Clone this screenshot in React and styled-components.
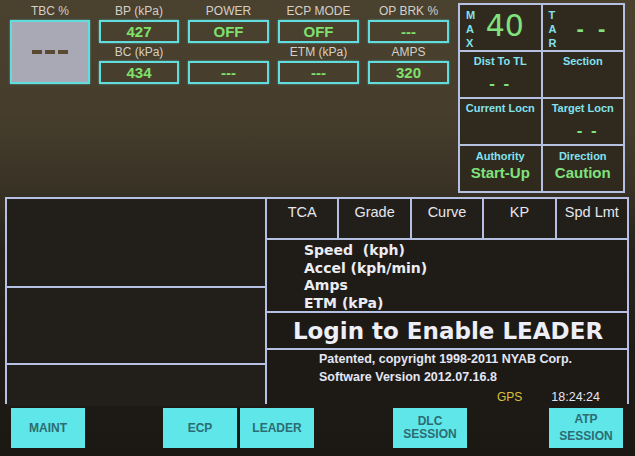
import React from 'react';
import styled, { createGlobalStyle } from 'styled-components';

const GlobalStyle = createGlobalStyle`
  html, body {
    margin: 0;
    padding: 0;
    background: #1c1915;
  }
  body {
    font-family: "Liberation Sans", Arial, sans-serif;
  }
`;

const LINE = '#b6c0e2';

const Screen = styled.div`
  width: 635px;
  height: 456px;
  overflow: hidden;
  display: flex;
  flex-direction: column;
  background: linear-gradient(
    180deg,
    #4a412f 0%,
    #463d2c 25%,
    #3a3326 40%,
    #27231c 55%,
    #201d18 75%,
    #1b1814 100%
  );
`;

const TopBar = styled.div`
  display: flex;
  height: 194px;
`;

const Gauges = styled.div`
  display: grid;
  grid-template-columns: 80px 80px 81px 81px 81px;
  grid-template-rows: 18px 23px 18px 23px;
  column-gap: 9px;
  align-content: start;
  padding: 2px 0 0 10px;
`;

const GaugeLabel = styled.div`
  font-size: 12px;
  color: #d4cfc6;
  text-align: center;
  align-self: center;
  white-space: nowrap;
`;

const ValueBox = styled.div`
  box-sizing: border-box;
  border: 2px solid #62dcdc;
  box-shadow: 0 0 2px rgba(98, 220, 220, 0.6);
  display: flex;
  align-items: center;
  justify-content: center;
  color: #7fe06c;
  font-size: 15px;
  font-weight: bold;
`;

const TbcBox = styled(ValueBox)`
  grid-column: 1;
  grid-row: 2 / 5;
  background: #a8a9b4;
  gap: 3px;
`;

const TbcDash = styled.span`
  width: 10px;
  height: 4px;
  background: #5a4a32;
`;

const StatusGrid = styled.div`
  box-sizing: border-box;
  width: 167px;
  height: 190px;
  margin: 3px 10px 0 auto;
  border: 2px solid ${LINE};
  background: ${LINE};
  display: grid;
  grid-template-columns: 1fr 1fr;
  grid-template-rows: repeat(4, 1fr);
  gap: 2px;
`;

const StatusCell = styled.div`
  background: #30291e;
  display: flex;
  flex-direction: column;
  align-items: center;
  padding-top: ${p => p.$top || 3}px;
  box-sizing: border-box;
`;

const LimitCell = styled.div`
  background: #30291e;
  display: flex;
  padding: 3px 0 0 6px;
  box-sizing: border-box;
`;

const Letters = styled.div`
  display: flex;
  flex-direction: column;
  color: #82e2ee;
  font-size: 11px;
  font-weight: bold;
  line-height: 14px;
`;

const BigNumber = styled.div`
  flex: 1;
  text-align: center;
  font-family: "DejaVu Sans", sans-serif;
  font-size: 30px;
  color: #80e27c;
  line-height: 36px;
  padding-right: 6px;
`;

const CellLabel = styled.div`
  color: #82e2ee;
  font-size: 11px;
  font-weight: bold;
  line-height: 13px;
`;

const CellValue = styled.div`
  color: #80e27c;
  font-weight: bold;
  font-size: ${p => p.$size || 15}px;
  line-height: 18px;
  margin-top: ${p => p.$gap || 0}px;
  margin-left: ${p => p.$shift || 0}px;
  letter-spacing: ${p => p.$spacing || 0}px;
  white-space: pre;
`;

const Board = styled.div`
  box-sizing: border-box;
  height: 207px;
  margin: 3px 6px 0 5px;
  border: 2px solid ${LINE};
  background: ${LINE};
  display: grid;
  grid-template-columns: 258px 1fr;
  gap: 2px;
`;

const Column = styled.div`
  display: grid;
  grid-template-rows: ${p => p.$rows};
  gap: 2px;
`;

const Pane = styled.div`
  background: #221f1a;
`;

const HeaderRow = styled.div`
  display: grid;
  grid-template-columns: repeat(5, 1fr);
  gap: 2px;
`;

const HeaderCell = styled.div`
  background: #221f1a;
  color: #e6e6ee;
  font-size: 14.5px;
  text-align: center;
  padding-top: 5px;
  white-space: nowrap;
`;

const Readouts = styled.div`
  background: #1f1c18;
  padding: 2px 0 0 37px;
  font-family: "DejaVu Sans", sans-serif;
  font-weight: bold;
  font-size: 14px;
  line-height: 17.5px;
  color: #ececf4;
  white-space: pre;
`;

const LoginPane = styled.div`
  background: #1d1a16;
  display: flex;
  align-items: center;
  justify-content: center;
  font-family: "DejaVu Sans", sans-serif;
  font-weight: bold;
  font-size: 23px;
  color: #eeeef6;
  padding-left: 2px;
`;

const InfoPane = styled.div`
  background: #1d1a16;
  padding-left: 52px;
  font-weight: bold;
  font-size: 12.5px;
  line-height: 18px;
  color: #e4e6f4;
`;

const StatusLine = styled.div`
  display: flex;
  gap: 29px;
  margin: 2px 0 0 178px;
  font-weight: normal;
  font-size: 12.5px;
`;

const Gps = styled.span`
  color: #d9c23c;
  font-size: 12px;
`;

const ButtonRow = styled.div`
  display: grid;
  grid-template-columns: repeat(8, 1fr);
  column-gap: 3px;
  height: 40px;
  padding: 4px 11px 0;
`;

const SoftKey = styled.button`
  grid-column: ${p => p.$col};
  margin-left: ${p => p.$nudge || 0}px;
  margin-right: ${p => -(p.$nudge || 0)}px;
  border: none;
  padding: 0;
  background: #5fe6e8;
  color: #2c6c72;
  font-family: "Liberation Sans", Arial, sans-serif;
  font-weight: bold;
  font-size: 12px;
  line-height: ${p => p.$lh || 14}px;
  text-align: center;
`;

const topGauges = [
  { label: 'BP (kPa)', value: '427' },
  { label: 'POWER', value: 'OFF' },
  { label: 'ECP MODE', value: 'OFF' },
  { label: 'OP BRK %', value: '---' },
];

const bottomGauges = [
  { label: 'BC (kPa)', value: '434' },
  { label: '', value: '---' },
  { label: 'ETM (kPa)', value: '---' },
  { label: 'AMPS', value: '320' },
];

const trackColumns = ['TCA', 'Grade', 'Curve', 'KP', 'Spd Lmt'];

const App = () => (
  <>
    <GlobalStyle />
    <Screen>
      <TopBar>
        <Gauges>
          <GaugeLabel>TBC %</GaugeLabel>
          {topGauges.map(g => (
            <GaugeLabel key={g.label}>{g.label}</GaugeLabel>
          ))}
          <TbcBox>
            <TbcDash />
            <TbcDash />
            <TbcDash />
          </TbcBox>
          {topGauges.map(g => (
            <ValueBox key={g.label}>{g.value}</ValueBox>
          ))}
          {bottomGauges.map((g, i) => (
            <GaugeLabel key={'l' + i}>{g.label}</GaugeLabel>
          ))}
          {bottomGauges.map((g, i) => (
            <ValueBox key={'v' + i}>{g.value}</ValueBox>
          ))}
        </Gauges>

        <StatusGrid>
          <LimitCell>
            <Letters>
              <span>M</span>
              <span>A</span>
              <span>X</span>
            </Letters>
            <BigNumber>40</BigNumber>
          </LimitCell>
          <LimitCell>
            <Letters>
              <span>T</span>
              <span>A</span>
              <span>R</span>
            </Letters>
            <CellValue $size={22} $gap={12} $shift={20} $spacing={4}>- -</CellValue>
          </LimitCell>
          <StatusCell>
            <CellLabel>Dist To TL</CellLabel>
            <CellValue $size={17} $gap={7} $spacing={2}>- -</CellValue>
          </StatusCell>
          <StatusCell>
            <CellLabel>Section</CellLabel>
          </StatusCell>
          <StatusCell>
            <CellLabel>Current Locn</CellLabel>
          </StatusCell>
          <StatusCell>
            <CellLabel>Target Locn</CellLabel>
            <CellValue $size={17} $gap={7} $shift={10} $spacing={2}>- -</CellValue>
          </StatusCell>
          <StatusCell $top={4}>
            <CellLabel>Authority</CellLabel>
            <CellValue $gap={1}>Start-Up</CellValue>
          </StatusCell>
          <StatusCell $top={4}>
            <CellLabel>Direction</CellLabel>
            <CellValue $gap={1}>Caution</CellValue>
          </StatusCell>
        </StatusGrid>
      </TopBar>

      <Board>
        <Column $rows="87px 75px 1fr">
          <Pane />
          <Pane />
          <Pane />
        </Column>
        <Column $rows="39px 71px 35px 1fr">
          <HeaderRow>
            {trackColumns.map(c => (
              <HeaderCell key={c}>{c}</HeaderCell>
            ))}
          </HeaderRow>
          <Readouts>
            <div>{'Speed  (kph)'}</div>
            <div>Accel (kph/min)</div>
            <div>Amps</div>
            <div>ETM (kPa)</div>
          </Readouts>
          <LoginPane>Login to Enable LEADER</LoginPane>
          <InfoPane>
            <div>Patented, copyright 1998-2011 NYAB Corp.</div>
            <div>Software Version 2012.07.16.8</div>
            <StatusLine>
              <Gps>GPS</Gps>
              <span>18:24:24</span>
            </StatusLine>
          </InfoPane>
        </Column>
      </Board>

      <ButtonRow>
        <SoftKey $col={1}>MAINT</SoftKey>
        <SoftKey $col={3} $nudge={-2}>ECP</SoftKey>
        <SoftKey $col={4} $nudge={-2}>LEADER</SoftKey>
        <SoftKey $col={6} $nudge={-3} $lh={13}>DLC<br />SESSION</SoftKey>
        <SoftKey $col={8} $nudge={-1} $lh={17}>ATP<br />SESSION</SoftKey>
      </ButtonRow>
    </Screen>
  </>
);

export default App;
